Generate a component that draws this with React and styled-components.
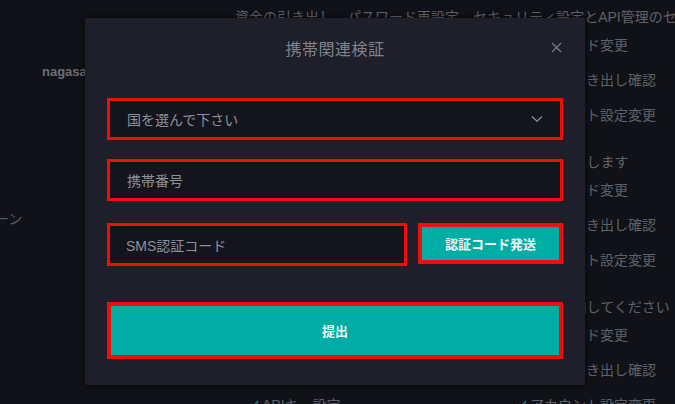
import React from 'react';
import styled, { createGlobalStyle } from 'styled-components';

const GlobalStyle = createGlobalStyle`
  html, body {
    margin: 0;
    padding: 0;
    background: #111217;
    font-family: "Liberation Sans", "Noto Sans CJK JP", sans-serif;
    overflow: hidden;
  }
`;

const sections = [
  {
    text: '資金の引き出し、パスワード再設定、セキュリティ設定とAPI管理のセキュリティを保護します',
    rows: [['パスワード変更'], ['資金の引き出し確認'], ['アカウント設定変更']],
  },
  {
    text: '24時間、出金とパスワード再設定時の二重認証を有効にします',
    rows: [['パスワード変更'], ['資金の引き出し確認'], ['アカウント設定変更']],
  },
  {
    text: 'アカウント保護のため、24時間以内に携帯の番号を追加してください',
    rows: [['パスワード変更'], ['資金の引き出し確認'], ['APIキー設定', 'アカウント設定変更']],
  },
];

const Chevron = () => (
  <svg width="12" height="8" viewBox="0 0 12 8" fill="none">
    <path d="M1 1.5 L6 6.2 L11 1.5" stroke="#8d9099" strokeWidth="1.2" />
  </svg>
);

const CloseIcon = () => (
  <svg width="11" height="11" viewBox="0 0 11 11" fill="none">
    <path d="M1 1 L10 10 M10 1 L1 10" stroke="#7d808a" strokeWidth="1.1" />
  </svg>
);

const Check = () => (
  <svg width="9" height="8" viewBox="0 0 9 8" fill="none">
    <path d="M1 4 L3.5 6.5 L8 1" stroke="#0f7f79" strokeWidth="1.6" />
  </svg>
);

export default function App() {
  return (
    <>
      <GlobalStyle />
      <Page>
        <Sidebar>
          <UserName>nagasaki</UserName>
          <NavItem>ーン</NavItem>
        </Sidebar>
        <Main>
          {sections.map((s, i) => (
            <Section key={i} first={i === 0}>
              <Description>{s.text}</Description>
              {s.rows.map((row, j) => (
                <ItemRow key={j}>
                  {row.length === 2 ? (
                    <Item>
                      <Check />
                      {row[0]}
                    </Item>
                  ) : (
                    <span />
                  )}
                  <Item>
                    <Check />
                    {row[row.length - 1]}
                  </Item>
                </ItemRow>
              ))}
            </Section>
          ))}
        </Main>

        <Modal>
          <Header>
            <Title>携帯関連検証</Title>
            <CloseButton>
              <CloseIcon />
            </CloseButton>
          </Header>
          <Form>
            <Field>
              <Placeholder>国を選んで下さい</Placeholder>
              <Chevron />
            </Field>
            <Field gap="22px">
              <Placeholder>携帯番号</Placeholder>
            </Field>
            <CodeRow>
              <CodeField>
                <Placeholder>SMS認証コード</Placeholder>
              </CodeField>
              <SendButton>認証コード発送</SendButton>
            </CodeRow>
            <SubmitButton>提出</SubmitButton>
          </Form>
        </Modal>
      </Page>
    </>
  );
}

const Page = styled.div`
  position: relative;
  width: 675px;
  height: 404px;
  display: flex;
  overflow: hidden;
  background: #111217;
`;

const Sidebar = styled.div`
  width: 84px;
  flex-shrink: 0;
  display: flex;
  flex-direction: column;
  padding-top: 64px;
  box-sizing: border-box;
`;

const UserName = styled.div`
  padding-left: 42px;
  font-size: 13px;
  font-weight: 700;
  color: #6b6d74;
  white-space: nowrap;
`;

const NavItem = styled.div`
  margin-top: 129px;
  margin-left: -5px;
  font-size: 14px;
  color: #55575e;
`;

const Main = styled.div`
  flex: 1;
  padding-left: 151px;
  padding-top: 7px;
  display: flex;
  flex-direction: column;
`;

const Section = styled.div`
  display: flex;
  flex-direction: column;
  margin-top: ${({ first }) => (first ? '0' : '21px')};
`;

const Description = styled.div`
  font-size: 14px;
  line-height: 20px;
  color: #5f6168;
  white-space: nowrap;
  margin-bottom: -1px;
`;

const ItemRow = styled.div`
  display: grid;
  grid-template-columns: 268px auto;
  padding-left: 15px;
  height: 35px;
  align-items: center;
`;

const Item = styled.div`
  display: flex;
  align-items: center;
  gap: 3px;
  font-size: 14px;
  color: #5f6168;
  white-space: nowrap;
`;

const Modal = styled.div`
  position: absolute;
  left: 85px;
  top: 18px;
  width: 500px;
  height: 367px;
  background: #1e1f2b;
  border-radius: 2px;
  box-shadow: 0 0 6px rgba(0, 0, 0, 0.6);
  display: flex;
  flex-direction: column;
`;

const Header = styled.div`
  height: 58px;
  display: flex;
  align-items: center;
  justify-content: center;
  position: relative;
  padding-top: 1px;
`;

const Title = styled.div`
  font-size: 16px;
  color: #80838d;
  letter-spacing: 0.5px;
`;

const CloseButton = styled.div`
  position: absolute;
  right: 23px;
  top: 24px;
  display: flex;
`;

const Form = styled.div`
  display: flex;
  flex-direction: column;
  padding: 21px 22px 0 22px;
`;

const Placeholder = styled.span`
  font-size: 14px;
  color: #8e9099;
`;

const Field = styled.div`
  height: 42px;
  flex-shrink: 0;
  box-sizing: border-box;
  border: 3px solid #f20d0d;
  background: #14151c;
  display: flex;
  align-items: center;
  justify-content: space-between;
  padding: 0 17px 0 17px;
  margin-bottom: ${({ gap }) => gap || '19px'};
`;

const CodeField = styled(Field)`
  width: 300px;
  height: 43px;
  margin-bottom: 0;
  padding-left: 16px;
`;

const CodeRow = styled.div`
  display: flex;
  align-items: flex-start;
  gap: 11px;
  margin-bottom: 36px;
`;

const SendButton = styled.div`
  width: 145px;
  height: 41px;
  box-sizing: border-box;
  border: 4px solid #f20d0d;
  background: #00ada4;
  color: #f2f4f5;
  font-size: 13px;
  font-weight: 700;
  display: flex;
  align-items: center;
  justify-content: center;
`;

const SubmitButton = styled.div`
  height: 57px;
  box-sizing: border-box;
  border: 4px solid #f20d0d;
  background: #00ada4;
  color: #f2f4f5;
  font-size: 13px;
  font-weight: 700;
  display: flex;
  align-items: center;
  justify-content: center;
`;
